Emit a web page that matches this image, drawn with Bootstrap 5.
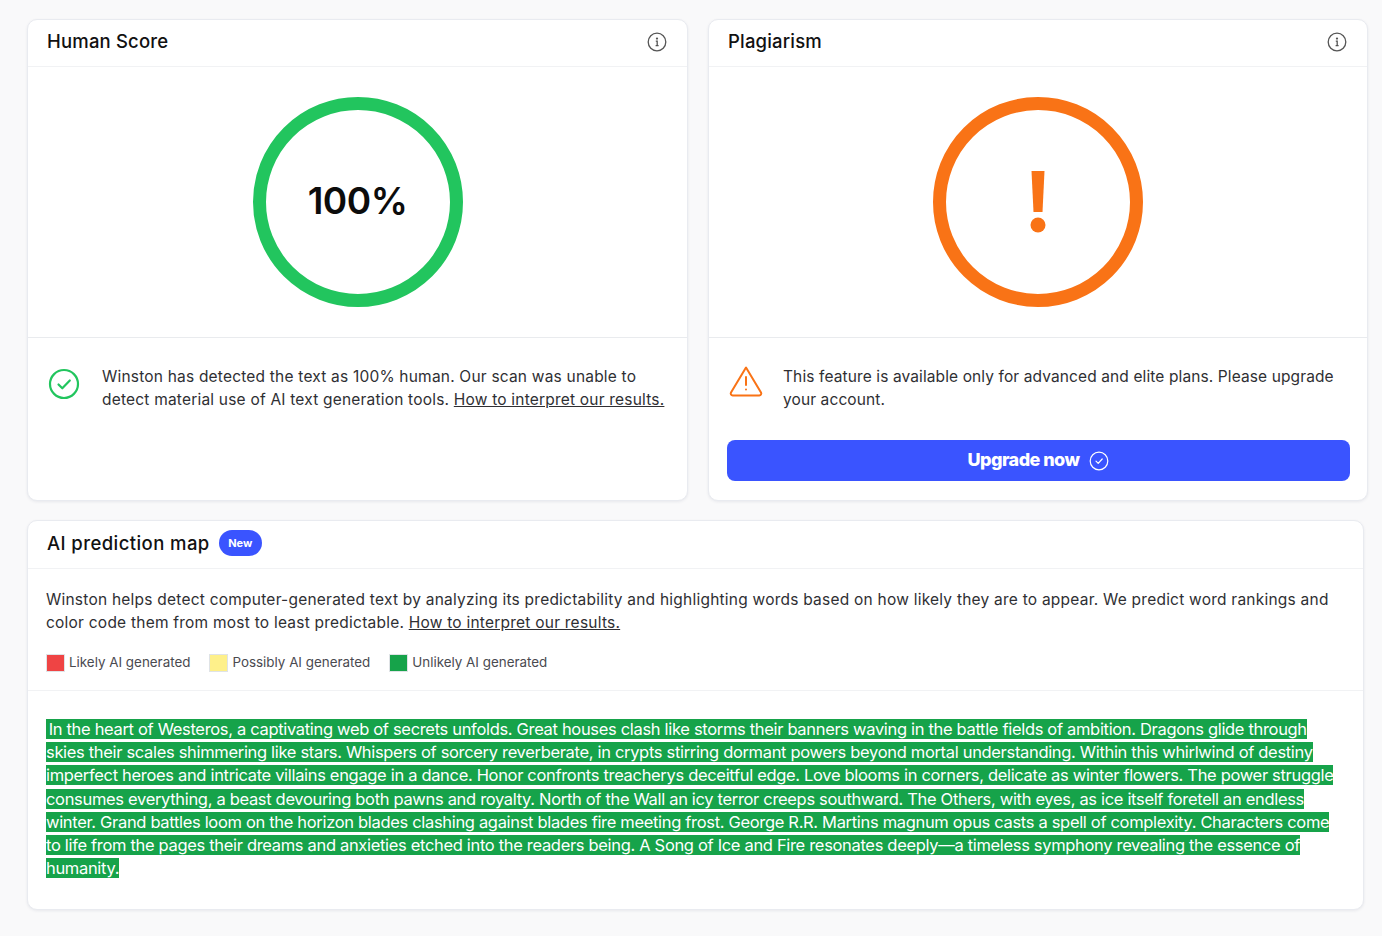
<!DOCTYPE html>
<html lang="en">
<head>
    <meta charset="UTF-8">
    <meta name="viewport" content="width=device-width, initial-scale=1.0">
    <title>Winston AI - Scan results</title>
    <link rel="stylesheet" href="https://cdn.jsdelivr.net/npm/bootstrap@5.3.0/dist/css/bootstrap.min.css">
    <style>
        body {
            background-color: #f9f9fa;
            color: #2f2f33;
            font-family: "Inter", "Noto Sans", sans-serif;
            font-size: 15.5px;
            line-height: 23px;
            letter-spacing: .2px;
            height: 936px;
            overflow: hidden;
        }
        .page-wrap {
            padding: 19px 14px 0 27px;
        }
        .top-row {
            width: 1341px;
            gap: 20px;
            margin-bottom: 19px;
        }
        .score-card {
            width: 661px;
            height: 482px;
        }
        .score-card:last-child {
            width: 660px;
        }
        .map-card {
            width: 1337px;
            height: 390px;
        }
        .card.score-card, .card.map-card {
            border: 1px solid #e9ebf0;
            border-radius: 10px;
            box-shadow: 0 1px 3px rgba(30, 40, 80, .08);
        }
        .head-bar {
            flex-shrink: 0;
            height: 47px;
            padding: 0 20px 3px 19px;
            border-bottom: 1px solid #f1f2f4;
        }
        .map-card .head-bar {
            height: 48px;
            gap: 9px;
        }
        .head-title {
            font-size: 18.5px;
            font-weight: 500;
            letter-spacing: .18px;
            color: #111;
        }
        .map-card .head-title {
            letter-spacing: .42px;
        }
        .gauge-area {
            flex-shrink: 0;
            height: 271px;
            border-bottom: 1px solid #e9ebee;
        }
        .gauge-ring {
            width: 210px;
            height: 210px;
            border-radius: 50%;
            border: 13px solid #22c55e;
        }
        .gauge-ring.warn {
            border-color: #f97316;
        }
        .gauge-text {
            font-size: 37px;
            font-weight: 600;
            color: #0c0c0c;
            letter-spacing: -.5px;
            padding-bottom: 3px;
        }
        .msg-row {
            padding: 27px 18px 0 20px;
            gap: 22px;
        }
        .msg-row.warn-row {
            padding-left: 20px;
            gap: 20px;
            letter-spacing: .11px;
        }
        .check-icon {
            margin-top: 3px;
        }
        .msg-row a, .map-intro a {
            color: inherit;
        }
        .upgrade-btn.btn {
            display: flex;
            align-items: center;
            justify-content: center;
            gap: 10px;
            width: 623px;
            height: 41px;
            margin: 29px 0 0 18px;
            background: #3a54ff;
            border: 0;
            border-radius: 8px;
            color: #fff;
            font-size: 18px;
            font-weight: 800;
            letter-spacing: -.55px;
        }
        .upgrade-label {
            padding-bottom: 2px;
        }
        .new-pill {
            background: #3a54ff;
            color: #fff;
            font-size: 11px;
            font-weight: 700;
            letter-spacing: 0;
            line-height: 26px;
            height: 26px;
            padding: 0 9.5px;
            border-radius: 13px;
        }
        .map-intro {
            padding: 19px 18px 0;
            letter-spacing: .23px;
        }
        .legend-row {
            padding: 17px 18px 16px;
            gap: 19px;
            border-bottom: 1px solid #f1f2f4;
            font-size: 13.4px;
            letter-spacing: 0;
            color: #4a4a50;
        }
        .swatch {
            width: 19px;
            height: 18px;
            margin-right: 4px;
            border: 1px solid #dfe3e6;
        }
        .swatch-red { background: #ef4444; }
        .swatch-yellow { background: #fef08a; }
        .swatch-green { background: #16a34a; }
        .map-text {
            padding: 27px 18px 0;
            font-size: 16.5px;
            line-height: 23.17px;
            letter-spacing: -.325px;
            color: #fff;
            white-space: nowrap;
        }
        .map-text span {
            background: #16a34a;
        }
    </style>
</head>
<body>
    <div class="page-wrap">
        <div class="top-row d-flex">
            <div class="card score-card">
                <div class="head-bar d-flex align-items-center justify-content-between">
                    <span class="head-title">Human Score</span>
                    <svg width="20" height="20" viewBox="0 0 20 20" fill="none" stroke="#555" stroke-width="1.3"><circle cx="10" cy="10" r="8.8"/><path d="M8.8 9.2h1.4v4.4M8.6 13.6h3"/><circle cx="10" cy="6.6" r=".5" fill="#555"/></svg>
                </div>
                <div class="gauge-area d-flex align-items-center justify-content-center">
                    <div class="gauge-ring d-flex align-items-center justify-content-center">
                        <span class="gauge-text">100%</span>
                    </div>
                </div>
                <div class="msg-row d-flex align-items-start">
                    <svg class="flex-shrink-0 check-icon" width="32" height="32" viewBox="0 0 32 32" fill="none" stroke="#22c55e" stroke-width="2.2" stroke-linecap="round" stroke-linejoin="round"><circle cx="16" cy="16" r="14"/><path d="M10.5 16.5l3.8 3.8 7.5-7.8"/></svg>
                    <div>Winston has detected the text as 100% human. Our scan was unable to<br>detect material use of AI text generation tools. <a href="#">How to interpret our results.</a></div>
                </div>
            </div>
            <div class="card score-card">
                <div class="head-bar d-flex align-items-center justify-content-between">
                    <span class="head-title">Plagiarism</span>
                    <svg width="20" height="20" viewBox="0 0 20 20" fill="none" stroke="#555" stroke-width="1.3"><circle cx="10" cy="10" r="8.8"/><path d="M8.8 9.2h1.4v4.4M8.6 13.6h3"/><circle cx="10" cy="6.6" r=".5" fill="#555"/></svg>
                </div>
                <div class="gauge-area d-flex align-items-center justify-content-center">
                    <div class="gauge-ring warn d-flex align-items-center justify-content-center">
                        <svg width="18" height="62" viewBox="0 0 18 62" fill="#f97316"><path d="M2.5 0h13l-2 41h-9z"/><circle cx="9" cy="54" r="7.5"/></svg>
                    </div>
                </div>
                <div class="msg-row warn-row d-flex align-items-start">
                    <svg class="flex-shrink-0" width="34" height="32" viewBox="0 0 34 32" fill="none" stroke="#f97316" stroke-width="2" stroke-linecap="round" stroke-linejoin="round"><path d="M17 2.5L2 27.5a2 2 0 0 0 1.8 3h26.4a2 2 0 0 0 1.8-3z"/><path d="M17 12v8M17 24.5v.1"/></svg>
                    <div>This feature is available only for advanced and elite plans. Please upgrade<br>your account.</div>
                </div>
                <a href="#" class="btn upgrade-btn"><span class="upgrade-label">Upgrade now</span>
                    <svg width="20" height="20" viewBox="0 0 20 20" fill="none" stroke="#fff" stroke-width="1.2" stroke-linecap="round" stroke-linejoin="round"><circle cx="10" cy="10" r="8.8"/><path d="M7 10.2l2.2 2.2 4-4.4"/></svg>
                </a>
            </div>
        </div>
        <div class="card map-card">
            <div class="head-bar d-flex align-items-center">
                <span class="head-title">AI prediction map</span>
                <span class="new-pill">New</span>
            </div>
            <div class="map-intro">Winston helps detect computer-generated text by analyzing its predictability and highlighting words based on how likely they are to appear. We predict word rankings and<br>color code them from most to least predictable. <a href="#">How to interpret our results.</a></div>
            <div class="legend-row d-flex align-items-center">
                <div class="d-flex align-items-center"><i class="swatch swatch-red"></i>Likely AI generated</div>
                <div class="d-flex align-items-center"><i class="swatch swatch-yellow"></i>Possibly AI generated</div>
                <div class="d-flex align-items-center"><i class="swatch swatch-green"></i>Unlikely AI generated</div>
            </div>
            <div class="map-text"><span>&#8201;In the heart of Westeros, a captivating web of secrets unfolds. Great houses clash like storms their banners waving in the battle fields of ambition. Dragons glide through<br>skies their scales shimmering like stars. Whispers of sorcery reverberate, in crypts stirring dormant powers beyond mortal understanding. Within this whirlwind of destiny<br>imperfect heroes and intricate villains engage in a dance. Honor confronts treacherys deceitful edge. Love blooms in corners, delicate as winter flowers. The power struggle<br>consumes everything, a beast devouring both pawns and royalty. North of the Wall an icy terror creeps southward. The Others, with eyes, as ice itself foretell an endless<br>winter. Grand battles loom on the horizon blades clashing against blades fire meeting frost. George R.R. Martins magnum opus casts a spell of complexity. Characters come<br>to life from the pages their dreams and anxieties etched into the readers being. A Song of Ice and Fire resonates deeply—a timeless symphony revealing the essence of<br>humanity.</span></div>
        </div>
    </div>
    <script src="https://cdn.jsdelivr.net/npm/bootstrap@5.3.0/dist/js/bootstrap.bundle.min.js"></script>
</body>
</html>
